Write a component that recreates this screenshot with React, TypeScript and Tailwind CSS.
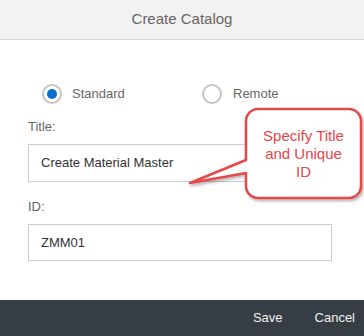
export default function App() {
  return (
    <div
      className="relative w-[364px] h-[336px] flex flex-col bg-white overflow-hidden"
      style={{ fontFamily: '"Liberation Sans", Arial, sans-serif' }}
    >
      {/* header */}
      <div className="h-10 flex items-center justify-center bg-[#f2f2f2] border-b border-[#d9d9d9] text-[15px] text-[#666]">
        Create Catalog
      </div>

      {/* form */}
      <div className="flex-1 flex flex-col pl-[28px] pr-[32px]">
        <div className="mt-[44px] ml-[14px] flex items-center text-[13px] text-[#666]">
          <label className="w-[160px] flex items-center gap-[10px]">
            <span className="w-5 h-5 rounded-full border-2 border-[#c4c4c4] flex items-center justify-center">
              <span className="w-[10px] h-[10px] rounded-full bg-[#0a6ed1]" />
            </span>
            Standard
          </label>
          <label className="flex items-center gap-[11px]">
            <span className="w-5 h-5 rounded-full border-2 border-[#c4c4c4]" />
            Remote
          </label>
        </div>

        <div className="mt-[15px] text-[13px] leading-4 text-[#666]">Title:</div>
        <div className="mt-[9px] h-[38px] border border-[#cccccc] flex items-center pl-[12px] text-[13px] text-[#333]">
          Create Material Master
        </div>

        <div className="mt-[17px] text-[13px] leading-4 text-[#666]">ID:</div>
        <div className="mt-[9px] h-[37px] border border-[#cccccc] flex items-center pl-[12px] text-[13px] text-[#333]">
          ZMM01
        </div>
      </div>

      {/* footer */}
      <div className="h-9 bg-[#363d44] flex items-center justify-end gap-8 pr-[9px] text-[13px] text-[#f2f2f2]">
        <button>Save</button>
        <button>Cancel</button>
      </div>

      {/* callout */}
      <svg
        className="absolute inset-0 pointer-events-none"
        width="364"
        height="336"
        viewBox="0 0 364 336"
      >
        <defs>
          <filter id="sh" x="-20%" y="-20%" width="140%" height="140%">
            <feDropShadow dx="1.5" dy="2" stdDeviation="1.5" floodColor="#000" floodOpacity="0.3" />
          </filter>
        </defs>
        <path
          d="M258 109 H349 A12 12 0 0 1 361 121 V186 A12 12 0 0 1 349 198 H258 A12 12 0 0 1 246 186 V173 L190 183 L246 160 V121 A12 12 0 0 1 258 109 Z"
          fill="#fff"
          stroke="#e5484a"
          strokeWidth="2.5"
          strokeLinejoin="round"
          filter="url(#sh)"
        />
      </svg>
      <div className="absolute left-[246px] top-[109px] w-[115px] h-[89px] flex flex-col items-center justify-center text-[15px] leading-[18px] text-[#e8454a] text-center">
        <span>Specify Title</span>
        <span>and Unique</span>
        <span>ID</span>
      </div>
    </div>
  );
}
